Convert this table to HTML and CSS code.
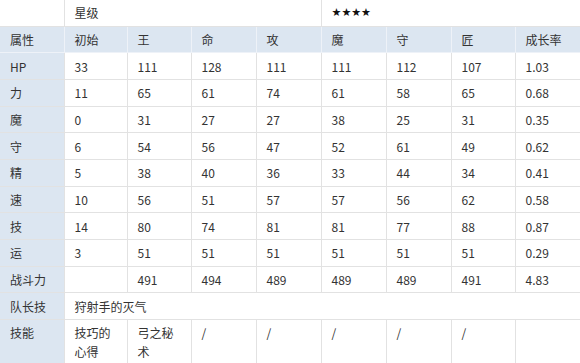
FILE: index.html
```html
<!DOCTYPE html>
<html>
<head>
<meta charset="utf-8">
<link rel="stylesheet" href="styles.css">
</head>
<body>
<table class="stats">
<colgroup>
<col class="c1"><col class="c2"><col class="c3"><col class="c4"><col class="c5"><col class="c6"><col class="c7"><col class="c8"><col class="c9">
</colgroup>
<tr class="r-top"><td class="blank"></td><td colspan="4">星级</td><td colspan="4" class="stars">★★★★</td></tr>
<tr class="head"><td>属性</td><td>初始</td><td>王</td><td>命</td><td>攻</td><td>魔</td><td>守</td><td>匠</td><td>成长率</td></tr>
<tr><th>HP</th><td>33</td><td>111</td><td>128</td><td>111</td><td>111</td><td>112</td><td>107</td><td>1.03</td></tr>
<tr><th>力</th><td>11</td><td>65</td><td>61</td><td>74</td><td>61</td><td>58</td><td>65</td><td>0.68</td></tr>
<tr><th>魔</th><td>0</td><td>31</td><td>27</td><td>27</td><td>38</td><td>25</td><td>31</td><td>0.35</td></tr>
<tr><th>守</th><td>6</td><td>54</td><td>56</td><td>47</td><td>52</td><td>61</td><td>49</td><td>0.62</td></tr>
<tr><th>精</th><td>5</td><td>38</td><td>40</td><td>36</td><td>33</td><td>44</td><td>34</td><td>0.41</td></tr>
<tr><th>速</th><td>10</td><td>56</td><td>51</td><td>57</td><td>57</td><td>56</td><td>62</td><td>0.58</td></tr>
<tr><th>技</th><td>14</td><td>80</td><td>74</td><td>81</td><td>81</td><td>77</td><td>88</td><td>0.87</td></tr>
<tr><th>运</th><td>3</td><td>51</td><td>51</td><td>51</td><td>51</td><td>51</td><td>51</td><td>0.29</td></tr>
<tr><th>战斗力</th><td></td><td>491</td><td>494</td><td>489</td><td>489</td><td>489</td><td>491</td><td>4.83</td></tr>
<tr><th>队长技</th><td colspan="8">狩射手的灭气</td></tr>
<tr class="skills"><th>技能</th><td>技巧的心得</td><td>弓之秘术</td><td>/</td><td>/</td><td>/</td><td>/</td><td>/</td><td></td></tr>
</table>
</body>
</html>
```
FILE: styles.css
```css
html, body {
  margin: 0;
  padding: 0;
  background: #fff;
}
.stats {
  border-collapse: collapse;
  table-layout: fixed;
  width: 580px;
  font-family: "Noto Sans CJK SC", "Liberation Sans", sans-serif;
  font-size: 12px;
  color: #333;
}
.c1 { width: 64px; }
.c2 { width: 63px; }
.c3 { width: 64px; }
.c4 { width: 65px; }
.c5 { width: 65px; }
.c6 { width: 65px; }
.c7 { width: 65px; }
.c8 { width: 64px; }
.c9 { width: 65px; }
.stats td, .stats th {
  border: 1px solid #e2e2e2;
  padding: 0 10px;
  height: 25.67px;
  text-align: left;
  font-weight: normal;
  vertical-align: middle;
  line-height: 19px;
}
.stats th {
  background: #dce6f1;
}
.stats tr:first-child td {
  border-top: none;
}
.stats td:first-child, .stats th:first-child {
  border-left: none;
}
.stats .head td {
  background: #dce6f1;
  border-color: #eef2f8;
}
.stats .head td:last-child {
  border-right-color: #e2e2e2;
}
.stars {
  font-family: "DejaVu Sans", sans-serif;
  font-size: 11px;
  color: #111;
}
.stats .skills td, .stats .skills th {
  vertical-align: top;
  height: 43px;
  padding-top: 3px;
}
```
